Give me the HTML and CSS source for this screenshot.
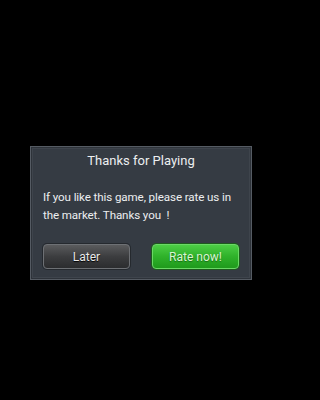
FILE: index.html
```html
<!DOCTYPE html>
<html>
<head>
<meta charset="utf-8">
<link rel="stylesheet" href="styles.css">
</head>
<body>
<div class="dialog">
  <div class="title">Thanks for Playing</div>
  <div class="message">If you like this game, please rate us in the market. Thanks you &nbsp;!</div>
  <div class="actions">
    <button class="btn btn-later">Later</button>
    <button class="btn btn-rate">Rate now!</button>
  </div>
</div>
</body>
</html>
```
FILE: styles.css
```css
html, body {
  margin: 0;
  padding: 0;
  background: #000;
}
body {
  font-family: Roboto, "Liberation Sans", sans-serif;
  padding-top: 146px;
  padding-bottom: 1px;
  box-sizing: border-box;
  min-height: 400px;
}
.dialog {
  box-sizing: border-box;
  margin-left: 30px;
  width: 222px;
  height: 134px;
  background: #353b43;
  border: 1px solid #555b63;
  box-shadow: inset 0 0 0 1px #2e333a, inset 0 0 0 2px #3e444c;
  padding: 5px 12px 0 12px;
  display: flex;
  flex-direction: column;
}
.title {
  color: #eceef0;
  font-size: 13px;
  line-height: 18px;
  text-align: center;
}
.message {
  color: #eceef0;
  font-size: 11.6px;
  line-height: 18px;
  margin-top: 18px;
  letter-spacing: -0.1px;
}
.actions {
  display: flex;
  justify-content: space-between;
  margin-top: 20px;
}
.btn {
  box-sizing: border-box;
  width: 87px;
  height: 25px;
  border-radius: 4px;
  font-family: Roboto, "Liberation Sans", sans-serif;
  font-size: 12px;
  padding: 0;
  cursor: pointer;
}
.btn-later {
  color: #e8e8e8;
  background: linear-gradient(#5a5b5d, #3c3d3f 50%, #2b2c2e);
  border: 1px solid #6d7074;
  box-shadow: 0 0 0 1px #25292e;
  text-shadow: 0 1px 1px #000;
}
.btn-rate {
  color: #d8f5d0;
  background: linear-gradient(#4ccd45, #2fb22a 50%, #1f9a1c);
  border: 1px solid #6ad865;
  box-shadow: 0 0 0 1px #1d5a1d;
  text-shadow: 0 1px 1px #1a6a18;
}
```
